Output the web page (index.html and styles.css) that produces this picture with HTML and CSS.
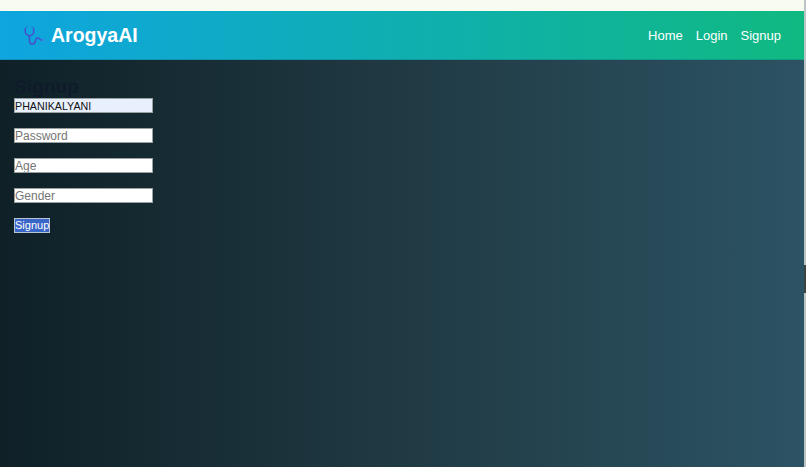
FILE: index.html
```html
<!DOCTYPE html>
<html lang="en">
<head>
<meta charset="utf-8">
<title>ArogyaAI</title>
<link rel="stylesheet" href="styles.css">
</head>
<body>
<div class="page">
  <div class="topstrip"></div>
  <header class="navbar">
    <div class="brand">
      <svg class="logo" viewBox="0 0 22 20" fill="none" stroke="#4552cc" stroke-width="1.600" stroke-linecap="round" stroke-linejoin="round">
        <path d="M2.300 3.500v3a4.200 4.200 0 0 0 8.400 0v-3"/>
        <path d="M6.500 10.700v5c0 4.500 5.500 4.500 6 0c.4-3 3-3.500 4.500-1.500c.6.800 1.300 1 2 .7"/>
        <path d="M4.200 2h-1M9.800 2h-1" stroke="#1f7fd8"/>
        <circle cx="20.300" cy="15" r="1" stroke="#2f8fe0"/>
      </svg>
      <span class="brand-name">ArogyaAI</span>
    </div>
    <nav class="links">
      <a href="#">Home</a>
      <a href="#">Login</a>
      <a href="#">Signup</a>
    </nav>
  </header>
  <main class="content">
    <h2 class="title">Signup</h2>
    <form class="form">
      <input class="field filled" type="text" value="PHANIKALYANI">
      <input class="field" type="password" placeholder="Password">
      <input class="field" type="text" placeholder="Age">
      <input class="field" type="text" placeholder="Gender">
      <button class="submit" type="button">Signup</button>
    </form>
  </main>
  <div class="edge-mark"></div>
</div>
</body>
</html>
```
FILE: styles.css
```css
html, body {
  margin: 0;
  padding: 0;
  height: 100%;
  overflow: hidden;
}
body {
  font-family: "Liberation Sans", Arial, sans-serif;
}
.page {
  position: relative;
  display: flex;
  flex-direction: column;
  width: 806px;
  height: 467px;
  box-sizing: border-box;
  border-right: 2px solid #bcc4c8;
}
.edge-mark {
  position: absolute;
  right: -2px;
  top: 265px;
  width: 2px;
  height: 28px;
  background: #3b4347;
}
.topstrip {
  height: 11px;
  background: #f8fbf0;
}
.navbar {
  height: 49px;
  box-sizing: border-box;
  display: flex;
  align-items: center;
  justify-content: space-between;
  padding: 0 23px;
  background: linear-gradient(90deg, #0ea5e0, #10b981);
  border-bottom: 1px solid rgba(20, 110, 130, 0.35);
}
.brand {
  display: flex;
  align-items: center;
  gap: 6px;
}
.logo {
  width: 22px;
  height: 20px;
}
.brand-name {
  color: #fff;
  font-size: 19.500px;
  font-weight: 700;
}
.links {
  display: flex;
  gap: 13px;
}
.links a {
  color: #fff;
  text-decoration: none;
  font-size: 13px;
}
.content {
  flex: 1;
  padding: 16px 14px 0;
  background: linear-gradient(90deg, #0f2027, #203a43 50%, #2c5364);
}
.title {
  margin: 0;
  height: 22px;
  font-size: 19.200px;
  line-height: 22px;
  font-weight: 700;
  color: #0f1a2a;
}
.form {
  display: flex;
  flex-direction: column;
  align-items: flex-start;
  gap: 15px;
}
.field {
  width: 139px;
  height: 15px;
  box-sizing: border-box;
  margin: 0;
  padding: 0;
  border: 1px solid #9aa1a3;
  background: #fff;
  font-family: "Liberation Sans", Arial, sans-serif;
  font-size: 12px;
  color: #111;
}
.field::placeholder {
  color: #757575;
}
.filled {
  background: #e8f0fe;
  font-size: 10.700px;
}
.submit {
  width: 36px;
  height: 15px;
  box-sizing: border-box;
  margin: 0;
  padding: 0;
  border: 1px solid #b9c3d6;
  background: #3a66c8;
  color: #fff;
  font-family: "Liberation Sans", Arial, sans-serif;
  font-size: 11px;
  line-height: 11px;
}
```
